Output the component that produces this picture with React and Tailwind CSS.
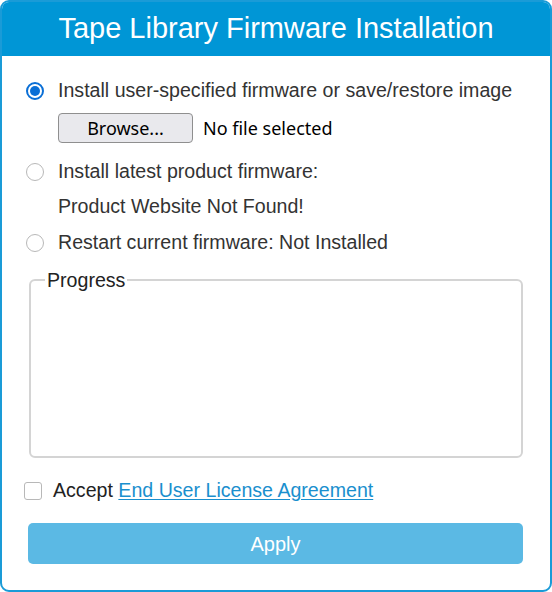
function Radio({ checked }) {
  return (
    <span
      className={
        "flex h-[18px] w-[18px] shrink-0 items-center justify-center rounded-full border " +
        (checked ? "border-[#0a6fd6] border-2" : "border-[#b8b8b8]")
      }
    >
      {checked && <span className="h-[10px] w-[10px] rounded-full bg-[#0a6fd6]" />}
    </span>
  );
}

export default function App() {
  return (
    <div className="w-[552px] h-[592px] bg-white" style={{ fontFamily: '"Liberation Sans", Arial, sans-serif' }}>
      <div className="flex h-full w-full flex-col overflow-hidden rounded-[9px] border-2 border-[#1a9bd7]">
        {/* header */}
        <div className="flex h-[54px] shrink-0 items-center justify-center bg-[#0096d6] text-[29px] text-white">
          Tape Library Firmware Installation
        </div>

        <div className="flex flex-col pl-[24px] pr-[27px] text-[19.6px] text-[#333333]">
          {/* option 1 */}
          <div className="mt-[23px] flex h-[24px] items-center gap-[14px]">
            <Radio checked />
            <span>Install user-specified firmware or save/restore image</span>
          </div>
          <div
            className="mt-[10px] flex items-center gap-[10px] pl-[32px] text-[18px] text-black"
            style={{ fontFamily: '"Noto Sans", "Open Sans", sans-serif' }}
          >
            <button className="flex h-[30px] w-[135px] items-center justify-center rounded-[4px] border border-[#8f8f8f] bg-[#e9e9ed] text-[18px] text-black">
              Browse...
            </button>
            <span>No file selected</span>
          </div>

          {/* option 2 */}
          <div className="mt-[17px] flex h-[24px] items-center gap-[14px]">
            <Radio />
            <span>Install latest product firmware:</span>
          </div>
          <div className="mt-[10px] h-[24px] pl-[32px] leading-[24px]">Product Website Not Found!</div>

          {/* option 3 */}
          <div className="mt-[13px] flex h-[24px] items-center gap-[14px]">
            <Radio />
            <span>Restart current firmware: Not Installed</span>
          </div>

          {/* progress */}
          <fieldset className="mt-[15px] ml-[3px] h-[188px] rounded-[6px] border-2 border-[#d4d4d4] px-[14px]">
            <legend className="px-[2px] text-[19.6px] leading-[20px] text-[#222222]">Progress</legend>
          </fieldset>

          {/* accept */}
          <div className="mt-[21px] -ml-[2px] flex h-[24px] items-center gap-[11px]">
            <span className="h-[18px] w-[18px] shrink-0 rounded-[3px] border border-[#b8b8b8]" />
            <span className="text-[#222222]">
              Accept{" "}
              <a className="text-[#1a8fce] underline underline-offset-2" href="#">
                End User License Agreement
              </a>
            </span>
          </div>

          {/* apply */}
          <button className="mt-[20px] ml-[2px] flex h-[41px] items-center justify-center rounded-[5px] bg-[#5bb9e4] text-[20px] text-white">
            Apply
          </button>
        </div>
      </div>
    </div>
  );
}
